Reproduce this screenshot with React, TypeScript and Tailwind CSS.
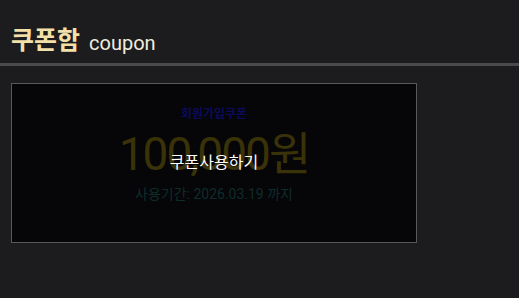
import React from 'react';

const coupons = [
  { name: '회원가입쿠폰', amount: '100,000원', until: '2026.03.19' },
];

export default function App() {
  return (
    <div
      className="min-h-[298px] w-full bg-[#1c1b1d]"
      style={{ fontFamily: 'Roboto, "Noto Sans CJK KR", sans-serif' }}
    >
      {/* Header */}
      <div className="flex h-[66px] items-end px-[11px] pb-[10px] border-b-[3px] border-[#4a494b]">
        <h1 className="text-[25px] font-bold leading-none text-[#f3e0a8]">쿠폰함</h1>
        <span className="ml-[9px] text-[20px] leading-none text-[#f1ecdf]">coupon</span>
      </div>

      {/* Coupon list */}
      <div className="px-[11px] pt-[17px]">
        {coupons.map((c) => (
          <div
            key={c.name}
            className="relative flex h-[160px] w-[406px] flex-col items-center border border-[#58575a] bg-[#060507]"
          >
            <div className="mt-[21px] text-[12px] font-bold text-[#0b0b5a]">{c.name}</div>
            <div className="mt-[8px] text-[46px] leading-none tracking-[-2px] text-[#3a3208]">
              {c.amount}
            </div>
            <div className="mt-[7px] text-[14px] text-[#0d2e2c]">사용기간: {c.until} 까지</div>

            {/* Used overlay label */}
            <div className="absolute inset-0 flex items-center justify-center">
              <span className="mt-[-1px] text-[16px] text-white">쿠폰사용하기</span>
            </div>
          </div>
        ))}
      </div>
    </div>
  );
}
